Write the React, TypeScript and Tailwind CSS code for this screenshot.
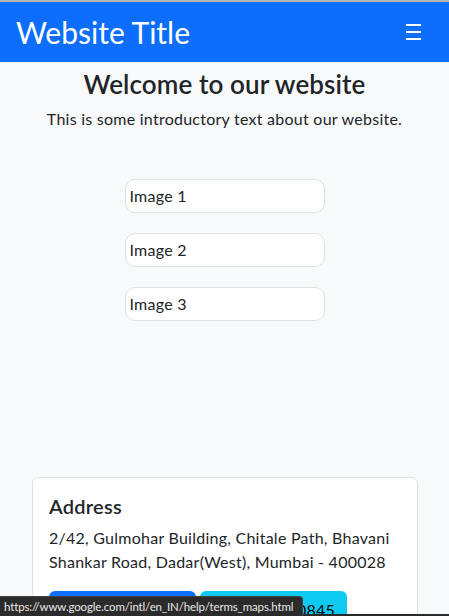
import React from "react";

const images = ["Image 1", "Image 2", "Image 3"];

const App = () => {
  return (
    <div className="min-h-[616px] bg-[#f8f9fa] text-[#212529] font-['Lato',sans-serif] tracking-[0.25px]">
      <div className="h-[2px] bg-[#b4b4b4]" />
      <nav className="h-[60px] bg-[#0d6efd] flex items-center justify-between pl-[16px] pr-[28px]">
        <span className="text-white text-[30px] leading-none tracking-normal">Website Title</span>
        <div className="flex flex-col gap-[5px] w-[15px]">
          <span className="h-[2px] bg-white" />
          <span className="h-[2px] bg-white" />
          <span className="h-[2px] bg-white" />
        </div>
      </nav>

      <header className="text-center pt-[7px]">
        <h2 className="text-[26px] leading-[30px] font-semibold mb-[8px] tracking-[0.1px]">Welcome to our website</h2>
        <p className="text-[16px] leading-[24px]">This is some introductory text about our website.</p>
      </header>

      <div className="flex flex-col items-center gap-[20px] mt-[48px]">
        {images.map((img) => (
          <div
            key={img}
            className="w-[200px] h-[34px] bg-white border border-[#dee2e6] rounded-[10px] flex items-center px-[4px] text-[16px]"
          >
            {img}
          </div>
        ))}
      </div>

      <div className="ml-[32px] mr-[31px] mt-[156px] bg-white border border-[#dee2e6] rounded-[6px] p-[16px] pb-[24px]">
        <h5 className="text-[20px] leading-[24px] font-semibold mb-[8px]">Address</h5>
        <p className="text-[16px] leading-[24px] mb-[17px]">
          2/42, Gulmohar Building, Chitale Path, Bhavani Shankar Road, Dadar(West), Mumbai - 400028
        </p>
        <div className="flex gap-[4px]">
          <button className="w-[147px] h-[38px] rounded-[6px] bg-[#0d6efd] text-white text-[16px]">
            Get Directions
          </button>
          <button className="w-[147px] h-[38px] rounded-[6px] bg-[#0dcaf0] text-black text-[16px] text-right pr-[12px]">
            +91 2224300845
          </button>
        </div>
      </div>

      <div className="fixed bottom-0 left-0 right-0 h-[2px] bg-[#2a2a2a]" />
      <div className="fixed bottom-0 left-0 w-[303px] h-[20px] bg-[#2b2b2b] border-t border-r border-[#444] rounded-tr-[4px] flex items-center pl-[4px] text-[11.5px] tracking-[-0.15px] text-[#e8e8e8] whitespace-nowrap overflow-hidden">
        https://www.google.com/intl/en_IN/help/terms_maps.html
      </div>
    </div>
  );
};

export default App;
